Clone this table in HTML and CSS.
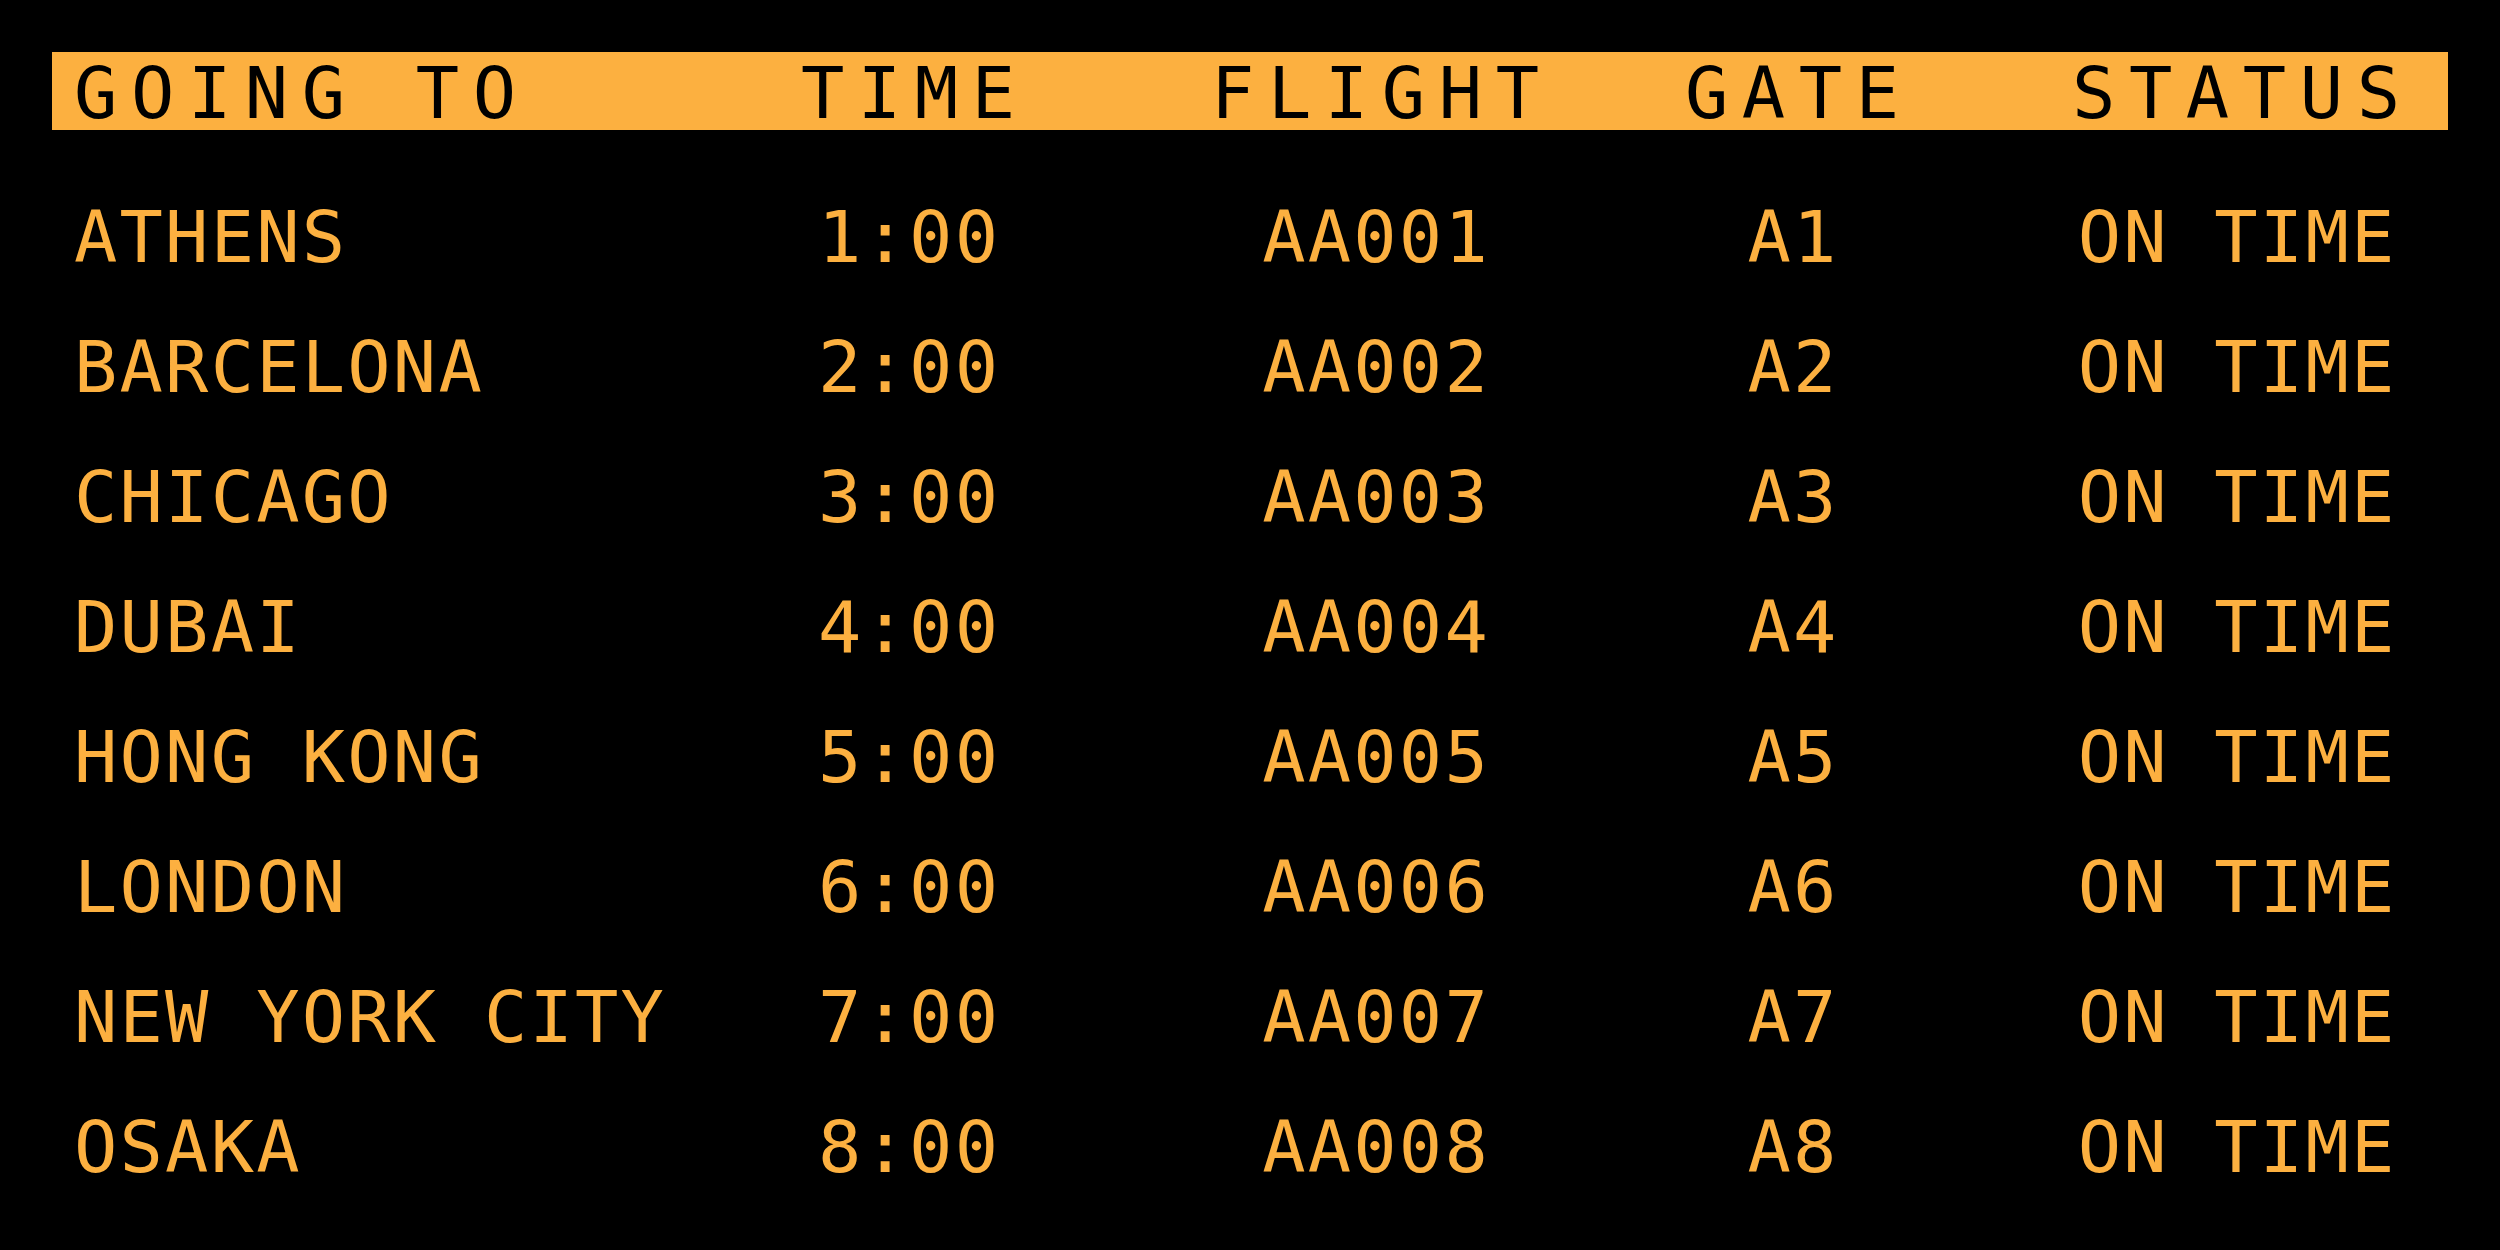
FILE: index.html
```html
<!DOCTYPE html>
<html lang="en">
<head>
<meta charset="utf-8">
<title>Departures</title>
<link rel="stylesheet" href="styles.css">
</head>
<body>
<main class="board">
  <div class="row head">
    <div class="cell city">GOING TO</div>
    <div class="cell">TIME</div>
    <div class="cell">FLIGHT</div>
    <div class="cell">GATE</div>
    <div class="cell">STATUS</div>
  </div>
  <div class="rows">
    <div class="row"><div class="cell city">ATHENS</div><div class="cell">1:00</div><div class="cell">AA001</div><div class="cell">A1</div><div class="cell">ON TIME</div></div>
    <div class="row"><div class="cell city">BARCELONA</div><div class="cell">2:00</div><div class="cell">AA002</div><div class="cell">A2</div><div class="cell">ON TIME</div></div>
    <div class="row"><div class="cell city">CHICAGO</div><div class="cell">3:00</div><div class="cell">AA003</div><div class="cell">A3</div><div class="cell">ON TIME</div></div>
    <div class="row"><div class="cell city">DUBAI</div><div class="cell">4:00</div><div class="cell">AA004</div><div class="cell">A4</div><div class="cell">ON TIME</div></div>
    <div class="row"><div class="cell city">HONG KONG</div><div class="cell">5:00</div><div class="cell">AA005</div><div class="cell">A5</div><div class="cell">ON TIME</div></div>
    <div class="row"><div class="cell city">LONDON</div><div class="cell">6:00</div><div class="cell">AA006</div><div class="cell">A6</div><div class="cell">ON TIME</div></div>
    <div class="row"><div class="cell city">NEW YORK CITY</div><div class="cell">7:00</div><div class="cell">AA007</div><div class="cell">A7</div><div class="cell">ON TIME</div></div>
    <div class="row"><div class="cell city">OSAKA</div><div class="cell">8:00</div><div class="cell">AA008</div><div class="cell">A8</div><div class="cell">ON TIME</div></div>
  </div>
</main>
</body>
</html>
```
FILE: styles.css
```css
html, body {
  margin: 0;
  padding: 0;
  background: #000;
}
body {
  width: 2500px;
  height: 1250px;
  overflow: hidden;
}
.board {
  padding: 52px;
  font-family: "DejaVu Sans Mono", "Liberation Mono", monospace;
  font-size: 72px;
  color: #fcb040;
}
.row {
  display: grid;
  grid-template-columns: 574px 564px 370px 464px 424px;
  height: 130px;
  line-height: 130px;
  letter-spacing: 2.2px;
  white-space: pre;
}
.cell {
  text-align: center;
  text-indent: 2.2px;
}
.cell.city {
  text-align: left;
  text-indent: 0;
  padding-left: 22px;
}
.row.head {
  background: #fcb040;
  color: #000;
  height: 78px;
  line-height: 78px;
  padding-top: 2px;
  box-sizing: border-box;
  letter-spacing: 13.6px;
}
.row.head .cell {
  text-indent: 13.6px;
}
.row.head .cell.city {
  text-indent: 0;
}
.rows {
  margin-top: 42px;
}
```
